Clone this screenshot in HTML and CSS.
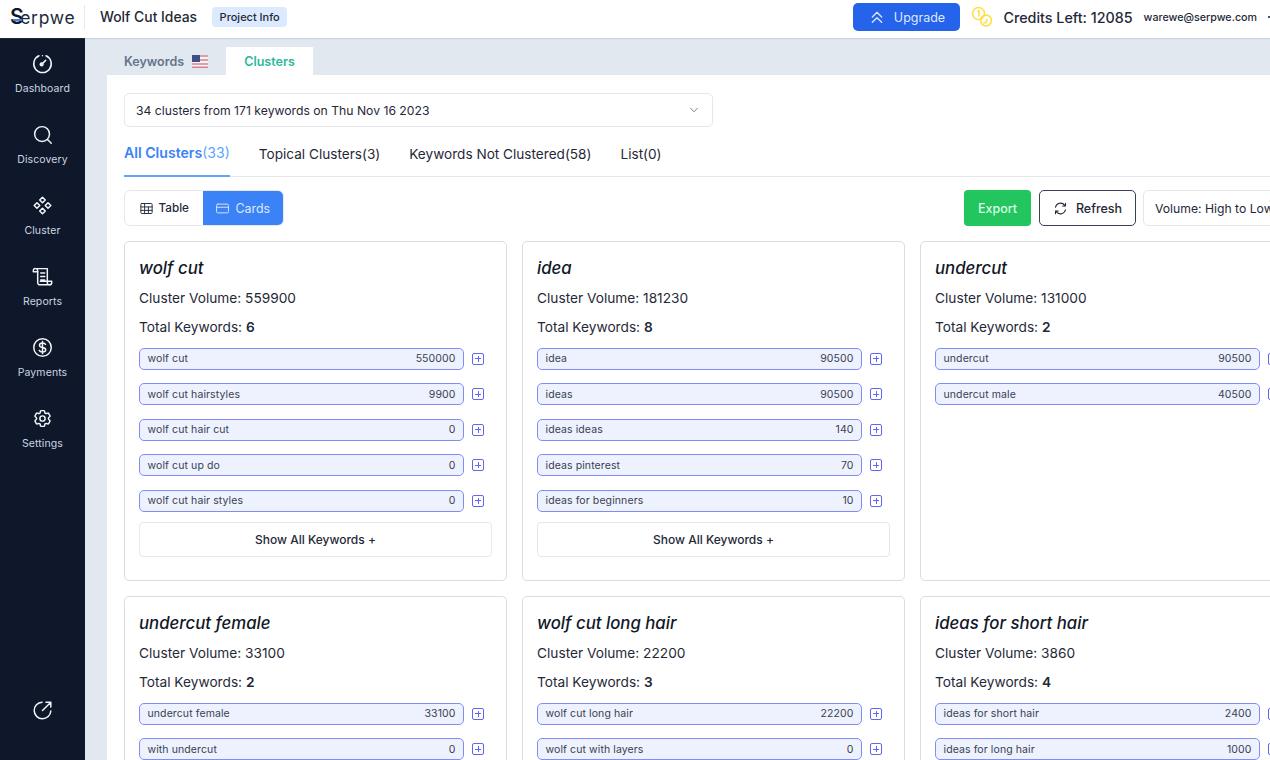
FILE: index.html
```html
<!DOCTYPE html>
<html lang="en">
<head>
<meta charset="utf-8">
<title>Wolf Cut Ideas</title>
<link rel="stylesheet" href="styles.css">
</head>
<body>
<header class="topbar">
  <div class="logo"><span class="logo-s">S</span>erpwe</div>
  <h1 class="project">Wolf Cut Ideas</h1>
  <span class="badge">Project Info</span>
  <div class="top-right">
    <button class="upgrade">
      <svg class="ico18" viewBox="0 0 24 24"><path d="M5 12l7-7 7 7M5 20l7-7 7 7"/></svg>
      Upgrade
    </button>
    <svg class="coins" viewBox="0 0 22 22"><circle cx="7.5" cy="7.5" r="6"/><path d="M7 5l1-.5V10"/><circle cx="15" cy="14.5" r="5.4"/><path d="M13 17l2-.5 1-3"/></svg>
    <span class="credits">Credits Left: 12085</span>
    <span class="email">warewe@serpwe.com</span>
    <span class="caret"></span>
  </div>
</header>
<div class="body">
  <nav class="side">
    <a class="nav"><svg viewBox="0 0 24 24"><path d="M16 3.2A10 10 0 1 1 8 3.2"/><path d="M12 3v0M10.6 13.4l5-5"/><circle cx="11" cy="13" r="1.6"/></svg>Dashboard</a>
    <a class="nav"><svg viewBox="0 0 24 24"><circle cx="11.5" cy="11.5" r="8.5"/><path d="M18 18l4 4"/></svg>Discovery</a>
    <a class="nav"><svg viewBox="0 0 24 24"><path d="M12 2.5l3.2 3.2-3.2 3.2-3.2-3.2zM18.3 8.8l3.2 3.2-3.2 3.2-3.2-3.2zM5.7 8.8L8.9 12l-3.2 3.2L2.5 12zM12 15.1l3.2 3.2-3.2 3.2-3.2-3.2z"/></svg>Cluster</a>
    <a class="nav"><svg viewBox="0 0 24 24"><path d="M3 3h14.5v16a2.5 2.5 0 0 0 2.5 2.5H9a2.5 2.5 0 0 1-2.500-2.500V5.500A2.500 2.500 0 0 0 4.500 3"/><path d="M3 3a2 2 0 0 0-1.500 2v1.500H6.500M10 8h4.500M10 12h4.500M10 16h4.500M9.500 17.500h13V19a2.500 2.500 0 0 1-2.500 2.500"/></svg>Reports</a>
    <a class="nav"><svg viewBox="0 0 24 24"><circle cx="12" cy="12" r="10"/><path d="M15.500 8.500C15 7.300 13.700 6.800 12 6.800c-2 0-3.500.9-3.500 2.600 0 3.800 7.200 1.500 7.200 5.200 0 1.700-1.600 2.600-3.700 2.600-1.800 0-3.200-.6-3.700-1.900M12 5v14"/></svg>Payments</a>
    <a class="nav"><svg viewBox="0 0 24 24"><path d="M9.594 3.940c.09-.542.56-.94 1.110-.94h2.593c.55 0 1.020.398 1.110.94l.213 1.281c.063.374.313.686.645.87.074.04.147.083.22.127.325.196.72.257 1.075.124l1.217-.456a1.125 1.125 0 0 1 1.370.49l1.296 2.247a1.125 1.125 0 0 1-.26 1.431l-1.003.827c-.293.241-.438.613-.43.992a7.723 7.723 0 0 1 0 .255c-.008.378.137.75.43.991l1.004.827c.424.35.534.955.26 1.430l-1.298 2.247a1.125 1.125 0 0 1-1.369.491l-1.217-.456c-.355-.133-.75-.072-1.076.124a6.470 6.470 0 0 1-.22.128c-.331.183-.581.495-.644.869l-.213 1.281c-.09.543-.56.94-1.110.94h-2.594c-.55 0-1.019-.398-1.110-.94l-.213-1.281c-.062-.374-.312-.686-.644-.87a6.520 6.520 0 0 1-.22-.127c-.325-.196-.72-.257-1.076-.124l-1.217.456a1.125 1.125 0 0 1-1.369-.49l-1.297-2.247a1.125 1.125 0 0 1 .26-1.431l1.004-.827c.292-.24.437-.613.43-.991a6.932 6.932 0 0 1 0-.255c.007-.38-.138-.751-.43-.992l-1.004-.827a1.125 1.125 0 0 1-.26-1.430l1.297-2.247a1.125 1.125 0 0 1 1.370-.491l1.216.456c.356.133.751.072 1.076-.124.072-.044.146-.086.22-.128.332-.183.582-.495.644-.869l.214-1.280Z"/><circle cx="12" cy="12" r="3"/></svg>Settings</a>
    <a class="nav nav-bottom"><svg viewBox="0 0 24 24"><path d="M21.500 12.500a9.500 9.500 0 1 1-10-10"/><path d="M12 12L21.500 2.500M16 2.500h5.500V8"/></svg></a>
  </nav>
  <main class="main">
    <div class="page-tabs">
      <div class="page-tab">Keywords
        <svg class="flag" viewBox="0 0 16 13"><rect width="16" height="13" fill="#f3f4f6"/><path d="M0 1h16M0 5h16M0 9h16M0 12.200h16" stroke="#d9808a" stroke-width="1.500"/><rect width="8" height="7" fill="#3f4f85"/></svg>
      </div>
      <div class="page-tab active">Clusters</div>
    </div>
    <section class="panel">
      <div class="inner">
        <div class="date-select">34 clusters from 171 keywords on Thu Nov 16 2023
          <svg viewBox="0 0 24 24"><path d="M6 9l6 6 6-6"/></svg>
        </div>
        <div class="sub-tabs">
          <div class="sub active"><b>All Clusters</b>(33)</div>
          <div class="sub">Topical Clusters(3)</div>
          <div class="sub">Keywords Not Clustered(58)</div>
          <div class="sub">List(0)</div>
        </div>
        <div class="toolbar">
          <div class="seg">
            <div class="seg-btn"><svg viewBox="0 0 24 24"><rect x="3" y="4" width="18" height="16" rx="1.500"/><path d="M3 9.500h18M3 15h18M9 4v16M15 9.500V20"/></svg>Table</div>
            <div class="seg-btn on"><svg viewBox="0 0 24 24"><rect x="2.500" y="5" width="19" height="14" rx="2"/><path d="M2.500 10h19"/></svg>Cards</div>
          </div>
          <div class="actions">
            <button class="export">Export</button>
            <button class="refresh"><svg viewBox="0 0 24 24"><path d="M4 10a8.300 8.300 0 0 1 14.500-3.500L20 8M20 3.500V8h-4.500M20 14a8.300 8.300 0 0 1-14.500 3.500L4 16M4 20.500V16h4.500"/></svg>Refresh</button>
            <div class="sort">Volume: High to Low</div>
          </div>
        </div>
        <div class="cards">
          <article class="card">
            <h2>wolf cut</h2>
            <p>Cluster Volume: 559900</p>
            <p>Total Keywords: <b>6</b></p>
            <ul class="kws">
              <li><span class="pill"><span>wolf cut</span><span>550000</span></span><i class="plus"></i></li>
              <li><span class="pill"><span>wolf cut hairstyles</span><span>9900</span></span><i class="plus"></i></li>
              <li><span class="pill"><span>wolf cut hair cut</span><span>0</span></span><i class="plus"></i></li>
              <li><span class="pill"><span>wolf cut up do</span><span>0</span></span><i class="plus"></i></li>
              <li><span class="pill"><span>wolf cut hair styles</span><span>0</span></span><i class="plus"></i></li>
            </ul>
            <div class="show">Show All Keywords +</div>
          </article>
          <article class="card">
            <h2>idea</h2>
            <p>Cluster Volume: 181230</p>
            <p>Total Keywords: <b>8</b></p>
            <ul class="kws">
              <li><span class="pill"><span>idea</span><span>90500</span></span><i class="plus"></i></li>
              <li><span class="pill"><span>ideas</span><span>90500</span></span><i class="plus"></i></li>
              <li><span class="pill"><span>ideas ideas</span><span>140</span></span><i class="plus"></i></li>
              <li><span class="pill"><span>ideas pinterest</span><span>70</span></span><i class="plus"></i></li>
              <li><span class="pill"><span>ideas for beginners</span><span>10</span></span><i class="plus"></i></li>
            </ul>
            <div class="show">Show All Keywords +</div>
          </article>
          <article class="card">
            <h2>undercut</h2>
            <p>Cluster Volume: 131000</p>
            <p>Total Keywords: <b>2</b></p>
            <ul class="kws">
              <li><span class="pill"><span>undercut</span><span>90500</span></span><i class="plus"></i></li>
              <li><span class="pill"><span>undercut male</span><span>40500</span></span><i class="plus"></i></li>
            </ul>
          </article>
          <article class="card">
            <h2>undercut female</h2>
            <p>Cluster Volume: 33100</p>
            <p>Total Keywords: <b>2</b></p>
            <ul class="kws">
              <li><span class="pill"><span>undercut female</span><span>33100</span></span><i class="plus"></i></li>
              <li><span class="pill"><span>with undercut</span><span>0</span></span><i class="plus"></i></li>
            </ul>
          </article>
          <article class="card">
            <h2>wolf cut long hair</h2>
            <p>Cluster Volume: 22200</p>
            <p>Total Keywords: <b>3</b></p>
            <ul class="kws">
              <li><span class="pill"><span>wolf cut long hair</span><span>22200</span></span><i class="plus"></i></li>
              <li><span class="pill"><span>wolf cut with layers</span><span>0</span></span><i class="plus"></i></li>
            </ul>
          </article>
          <article class="card">
            <h2>ideas for short hair</h2>
            <p>Cluster Volume: 3860</p>
            <p>Total Keywords: <b>4</b></p>
            <ul class="kws">
              <li><span class="pill"><span>ideas for short hair</span><span>2400</span></span><i class="plus"></i></li>
              <li><span class="pill"><span>ideas for long hair</span><span>1000</span></span><i class="plus"></i></li>
            </ul>
          </article>
        </div>
      </div>
    </section>
  </main>
</div>
</body>
</html>
```
FILE: styles.css
```css
* { box-sizing: border-box; }
html, body { margin: 0; height: 100%; overflow: hidden; }
body { font-family: Inter, "Liberation Sans", sans-serif; color: #1f2937; background: #e2e8f0; display: flex; flex-direction: column; }
svg { fill: none; stroke: currentColor; stroke-width: 2; stroke-linecap: round; stroke-linejoin: round; flex: none; }
button { font: inherit; cursor: pointer; }

.topbar { height: 38px; flex: none; background: #fff; display: flex; align-items: center; padding: 0 0 4px 10px; box-shadow: 0 1px 1px rgba(100,116,139,.18); position: relative; z-index: 1; }
.logo { position: relative; width: 75px; height: 24px; font: 400 17.500px/24px Inter, sans-serif; color: #1e293b; letter-spacing: .7px; border-right: 1px solid #e5e7eb; white-space: nowrap; }
.logo-s { font-size: 21px; font-weight: 600; color: #111827; letter-spacing: -3.500px; }
.logo::after { content: ""; position: absolute; left: 3px; top: 14px; width: 9px; height: 2px; background: #3b82f6; }
.project { margin: 0 15px; font-size: 13.900px; font-weight: 500; color: #1f2937; }
.badge { background: #dbeafe; border-radius: 4px; font-size: 11px; font-weight: 500; line-height: 20px; padding: 0 7.500px; color: #1f2937; }
.top-right { margin-left: auto; display: flex; align-items: center; flex: none; margin-right: -6px; }
.upgrade { width: 107px; height: 28px; background: #2563eb; color: #dbeafe; border: 0; border-radius: 5px; font-size: 12.500px; font-weight: 400; display: flex; align-items: center; justify-content: center; gap: 9px; }
.ico18 { width: 16px; height: 16px; }
.coins { width: 22px; height: 22px; margin-left: 11px; color: #fde047; stroke-width: 1.600; }
.credits { margin-left: 10px; font-size: 14.300px; font-weight: 500; color: #1f2937; }
.email { margin-left: 11px; font-size: 10.700px; font-weight: 500; color: #1f2937; }
.caret { width: 8px; height: 2px; margin-left: 11px; background: #4b5563; }

.body { flex: 1; display: flex; min-height: 0; }
.side { width: 85px; flex: none; background: #0f172a; display: flex; flex-direction: column; padding-top: 15px; }
.nav { height: 71px; display: flex; flex-direction: column; align-items: center; color: #cbd5e1; font-size: 10.500px; line-height: 14px; letter-spacing: .1px; }
.nav svg { width: 21px; height: 21px; margin-bottom: 8px; color: #f1f5f9; stroke-width: 1.700; }
.nav-bottom { margin-top: auto; height: auto; padding-bottom: 39px; }
.nav-bottom svg { margin: 0; }

.main { flex: 1; min-width: 0; padding: 9px 0 0 22px; display: flex; flex-direction: column; overflow: hidden; }
.page-tabs { display: flex; height: 28px; flex: none; }
.page-tab { width: 119px; display: flex; align-items: center; justify-content: flex-start; padding-left: 17px; gap: 8px; font-size: 12.500px; font-weight: 600; color: #64748b; }
.page-tab.active { width: 87px; background: #fff; color: #2db89b; justify-content: center; padding: 0; }
.flag { width: 16px; height: 13px; stroke: none; }
.flag path { fill: none; }
.panel { flex: 1; background: #fff; padding: 18px 0 0 17px; overflow: hidden; }
.inner { width: 1179px; }

.date-select { width: 589px; height: 34px; border: 1px solid #e5e7eb; border-radius: 5px; display: flex; align-items: center; justify-content: space-between; padding: 0 11px; font-size: 12.200px; color: #1f2937; }
.date-select svg { width: 14px; height: 14px; color: #64748b; stroke-width: 1.500; }

.sub-tabs { margin-top: 13px; height: 37px; display: flex; gap: 29px; border-bottom: 1px solid #e5e7eb; margin-right: 33px; font-size: 13.600px; }
.sub { line-height: 28px; color: #1f2937; height: 36px; }
.sub.active { color: #60a5fa; border-bottom: 2px solid #60a5fa; height: 37px; font-size: 14.100px; line-height: 26px; }
.sub.active b { font-weight: 600; color: #3b82f6; }

.toolbar { margin-top: 13px; height: 36px; display: flex; justify-content: space-between; }
.seg { display: flex; width: 160px; border: 1px solid #e5e7eb; border-radius: 6px; overflow: hidden; font-size: 11.700px; }
.seg-btn { flex: 78 0 0; display: flex; align-items: center; justify-content: center; gap: 5px; color: #1f2937; font-weight: 500; }
.seg-btn.on { flex: 81 0 0; background: #3b82f6; color: #dbeafe; font-size: 12.400px; font-weight: 400; }
.seg-btn svg { width: 15px; height: 15px; stroke-width: 1.500; }
.actions { display: flex; gap: 8px; align-items: stretch; }
.export { width: 67px; background: #22c55e; color: #dcfce7; border: 0; border-radius: 4px; font-size: 12.500px; font-weight: 500; }
.refresh { width: 97px; background: #fff; border: 1px solid #374151; border-radius: 5px; color: #1f2937; font-size: 12.500px; font-weight: 500; display: flex; align-items: center; justify-content: center; gap: 8px; margin-right: -1px; }
.refresh svg { width: 15px; height: 15px; stroke-width: 1.700; }
.sort { width: 160px; border: 1px solid #e5e7eb; border-radius: 5px; padding: 0 11px; display: flex; align-items: center; font-size: 12.200px; color: #1f2937; white-space: nowrap; }

.cards { margin-top: 15px; display: grid; grid-template-columns: repeat(3, 383px); grid-auto-rows: 340px; gap: 15px; }
.card { border: 1px solid #d9dde3; border-radius: 5px; padding: 14px 14px 0; }
.card h2 { margin: 0; font-size: 16.800px; line-height: 24px; font-weight: 500; font-style: italic; color: #111827; }
.card p { margin: 0; font-size: 13.700px; line-height: 18px; color: #1f2937; margin-top: 10.500px; }
.card h2 + p { margin-top: 9px; }
.card p b { font-weight: 600; }
.kws { list-style: none; margin: 12px 0 0; padding: 0; display: flex; flex-direction: column; gap: 13.500px; }
.kws li { display: flex; align-items: center; gap: 8px; height: 22px; }
.pill { width: 325px; height: 22px; flex: none; background: #eef2ff; border: 1px solid #818cf8; border-radius: 5px; display: flex; justify-content: space-between; align-items: center; padding: 0 7.500px; font-size: 10.500px; color: #374151; letter-spacing: .1px; }
.plus { width: 12px; height: 12px; flex: none; border: 1px solid #6366f1; border-radius: 2px; background: linear-gradient(#6366f1,#6366f1) center/6px 1px no-repeat, linear-gradient(#6366f1,#6366f1) center/1px 6px no-repeat; }
.show { width: 353px; height: 35px; margin-top: 10.500px; border: 1px solid #e5e7eb; border-radius: 4px; display: flex; align-items: center; justify-content: center; font-size: 12px; font-weight: 500; color: #1f2937; }
```
